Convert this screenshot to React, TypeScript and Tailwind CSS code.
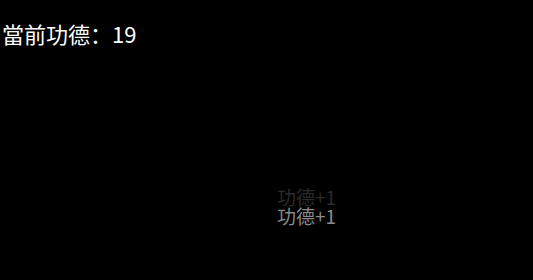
export default function App() {
  return (
    <div
      className="relative w-full h-screen overflow-hidden bg-black text-white"
      style={{ fontFamily: '"Noto Sans CJK SC", "Noto Sans", sans-serif' }}
    >
      {/* merit counter */}
      <div className="pt-[15px] pl-[2px] text-[22px] leading-[36px]">當前功德：19</div>

      {/* floating +1 texts */}
      <div className="absolute left-[277px] top-[184px] text-[19px] leading-[26px] text-[#2b2b2b]">功德+1</div>
      <div className="absolute left-[277px] top-[203px] text-[19px] leading-[26px] text-[#8a8a8a]">功德+1</div>
    </div>
  );
}
